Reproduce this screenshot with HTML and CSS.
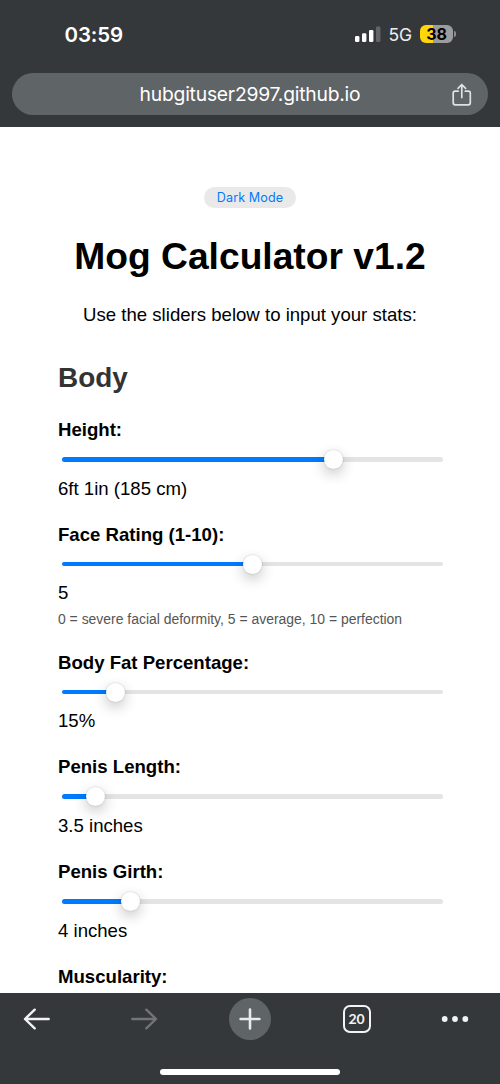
FILE: index.html
```html
<!DOCTYPE html>
<html lang="en">
<head>
<meta charset="utf-8">
<title>Mog Calculator v1.2</title>
<link rel="stylesheet" href="styles.css">
</head>
<body>
<div class="phone">
  <header class="top">
    <div class="status">
      <span class="clock">03:59</span>
      <div class="indicators">
        <svg class="signal" width="26" height="16" viewBox="0 0 26 16">
          <rect x="0" y="10" width="4.4" height="6" rx="1.3" fill="#fff"/>
          <rect x="7" y="7.2" width="4.4" height="8.8" rx="1.3" fill="#fff"/>
          <rect x="14" y="4" width="4.4" height="12" rx="1.3" fill="#fff"/>
          <rect x="21" y="0.5" width="4.4" height="15.5" rx="1.3" fill="#636668"/>
        </svg>
        <span class="network">5G</span>
        <div class="battery"><span class="level">38</span><i class="cap"></i></div>
      </div>
    </div>
    <div class="urlbar">
      <span class="url">hubgituser2997.github.io</span>
      <svg class="share" width="20" height="24" viewBox="0 0 20 24" fill="none" stroke="#dfe1e5" stroke-width="1.7" stroke-linecap="round" stroke-linejoin="round">
        <path d="M6.2 8.2H3.2Q1.2 8.2 1.2 10.2V19.8Q1.2 21.8 3.2 21.8H16.3Q18.3 21.8 18.3 19.8V10.2Q18.3 8.2 16.3 8.2H13.3M9.8 14.6V2M6 5.3L9.8 1.5L13.6 5.3"/>
      </svg>
    </div>
  </header>

  <main class="page">
    <button class="mode">Dark Mode</button>
    <h1 class="title">Mog Calculator v1.2</h1>
    <p class="intro">Use the sliders below to input your stats:</p>
    <h2 class="section">Body</h2>
    <div class="group">
      <div class="label">Height:</div>
      <div class="slider"><div class="track"><div class="fill" style="width:271.5px"><i class="thumb"></i></div></div></div>
      <div class="value">6ft 1in (185 cm)</div>
    </div>
    <div class="group">
      <div class="label">Face Rating (1-10):</div>
      <div class="slider"><div class="track"><div class="fill" style="width:190.5px"><i class="thumb"></i></div></div></div>
      <div class="value">5</div>
      <div class="note">0 = severe facial deformity, 5 = average, 10 = perfection</div>
    </div>
    <div class="group">
      <div class="label">Body Fat Percentage:</div>
      <div class="slider"><div class="track"><div class="fill" style="width:53.7px"><i class="thumb"></i></div></div></div>
      <div class="value">15%</div>
    </div>
    <div class="group">
      <div class="label">Penis Length:</div>
      <div class="slider"><div class="track"><div class="fill" style="width:34px"><i class="thumb"></i></div></div></div>
      <div class="value">3.5 inches</div>
    </div>
    <div class="group">
      <div class="label">Penis Girth:</div>
      <div class="slider"><div class="track"><div class="fill" style="width:68.7px"><i class="thumb"></i></div></div></div>
      <div class="value">4 inches</div>
    </div>
    <div class="group">
      <div class="label">Muscularity:</div>
    </div>
  </main>

  <footer class="bottom">
    <nav class="toolbar">
      <svg width="28" height="24" viewBox="0 0 28 24" fill="none" stroke="#f1f3f4" stroke-width="2.4" stroke-linecap="round" stroke-linejoin="round"><path d="M25.7 12H2M11.7 2.7L2 12L11.7 21.3"/></svg>
      <svg width="28" height="24" viewBox="0 0 28 24" fill="none" stroke="#727476" stroke-width="2.4" stroke-linecap="round" stroke-linejoin="round"><path d="M2.3 12H26M16.3 2.7L26 12L16.3 21.3"/></svg>
      <div class="plus"><svg width="24" height="24" viewBox="0 0 24 24" stroke="#e8eaed" stroke-width="2.6" stroke-linecap="round"><path d="M2.6 12H21.4M12 2.6V21.4"/></svg></div>
      <div class="tabs">20</div>
      <svg width="28" height="24" viewBox="0 0 28 24" fill="#f1f3f4"><circle cx="3.7" cy="12" r="2.9"/><circle cx="14" cy="12" r="2.9"/><circle cx="24.3" cy="12" r="2.9"/></svg>
    </nav>
    <div class="home"></div>
  </footer>
</div>
</body>
</html>
```

FILE: styles.css
```css
* { box-sizing: border-box; }
body { margin: 0; background: #fff; }
.phone {
  width: 500px;
  height: 1084px;
  display: flex;
  flex-direction: column;
  overflow: hidden;
  font-family: "Liberation Sans", Arial, sans-serif;
  color: #000;
}
.top { flex: none; height: 127px; background: #35383b; padding: 0 12px; }
.status {
  height: 73px;
  padding: 0 32px 5px 52.5px;
  display: flex;
  align-items: center;
  justify-content: space-between;
  font-family: Inter, sans-serif;
  color: #fff;
}
.clock { font-size: 20.5px; font-weight: 600; letter-spacing: -0.1px; }
.indicators { display: flex; align-items: center; }
.network { font-size: 17.5px; margin: 0 0 0 8px; width: 31.5px; letter-spacing: -0.2px; color: #eeeeef; }
.battery {
  position: relative;
  width: 33px;
  height: 18px;
  border-radius: 6px;
  background: linear-gradient(90deg, #ffd60a 38%, #9b9c9e 38%);
  margin-right: 3px;
}
.level {
  display: block;
  text-align: center;
  font-size: 16px;
  line-height: 18px;
  font-weight: 700;
  color: #000;
}
.cap {
  position: absolute;
  right: -3px;
  top: 6px;
  width: 2px;
  height: 6px;
  border-radius: 0 2px 2px 0;
  background: #8a8c8e;
}
.urlbar {
  height: 42px;
  border-radius: 21px;
  background: #5f6467;
  display: grid;
  grid-template-columns: 36px 1fr 36px;
  align-items: center;
}
.url {
  grid-column: 2;
  text-align: center;
  font: 400 19.3px Inter, sans-serif;
  letter-spacing: -0.22px;
  color: #fff;
  white-space: nowrap;
}
.share { margin: 2px 0 0 -0.5px; }
.page {
  flex: 1;
  min-height: 0;
  overflow: hidden;
  padding: 60px 58px 0;
  display: flex;
  flex-direction: column;
}
.page > * { flex: none; }
.mode {
  align-self: center;
  width: 92px;
  height: 21px;
  padding: 0;
  border: 0;
  border-radius: 11px;
  background: #e9e9ea;
  color: #007aff;
  font: 400 12.6px/21px Inter, sans-serif;
  letter-spacing: 0.1px;
}
.title { margin: 27px 0 0; font-size: 37.2px; line-height: 43px; text-align: center; white-space: nowrap; }
.intro { margin: 26px 0 0; font-size: 18.6px; line-height: 22px; text-align: center; white-space: nowrap; }
.section { margin: 36px 0 0; font-size: 27.9px; line-height: 32px; color: #333; }
.section + .group { margin-top: 25px; }
.group { margin-bottom: 24px; font-size: 18.6px; line-height: 22px; }
.label { font-weight: 700; }
.slider { height: 36.7px; padding-left: 3.7px; display: flex; align-items: center; }
.track { flex: none; width: 381.3px; height: 4.7px; border-radius: 3px; background: #e4e4e4; }
.fill { position: relative; height: 100%; border-radius: 3px; background: #007aff; }
.thumb {
  position: absolute;
  right: -9.5px;
  top: -7.2px;
  width: 19px;
  height: 19px;
  border-radius: 50%;
  background: #fff;
  box-shadow: 0 0 2px rgba(0,0,0,.2), 0 5px 14px rgba(0,0,0,.24);
}
.note { padding-top: 6.4px; font-size: 13.95px; line-height: 17px; color: #555; white-space: nowrap; }
.bottom { flex: none; height: 91px; background: #35383b; }
.toolbar {
  height: 51px;
  padding-right: 17px;
  display: grid;
  grid-template-columns: 74px 139px 74px 139px 57px;
  align-items: center;
  justify-items: center;
}
.plus {
  width: 42px;
  height: 42px;
  border-radius: 50%;
  background: #5f6467;
  display: flex;
  align-items: center;
  justify-content: center;
}
.tabs {
  width: 28px;
  height: 28px;
  border: 2px solid #f1f3f4;
  border-radius: 7px;
  color: #f1f3f4;
  font: 700 14px/24px Lato, sans-serif;
  text-align: center;
}
.home { width: 180px; height: 6px; margin: 25px auto 0; border-radius: 3px; background: #fff; }
```
